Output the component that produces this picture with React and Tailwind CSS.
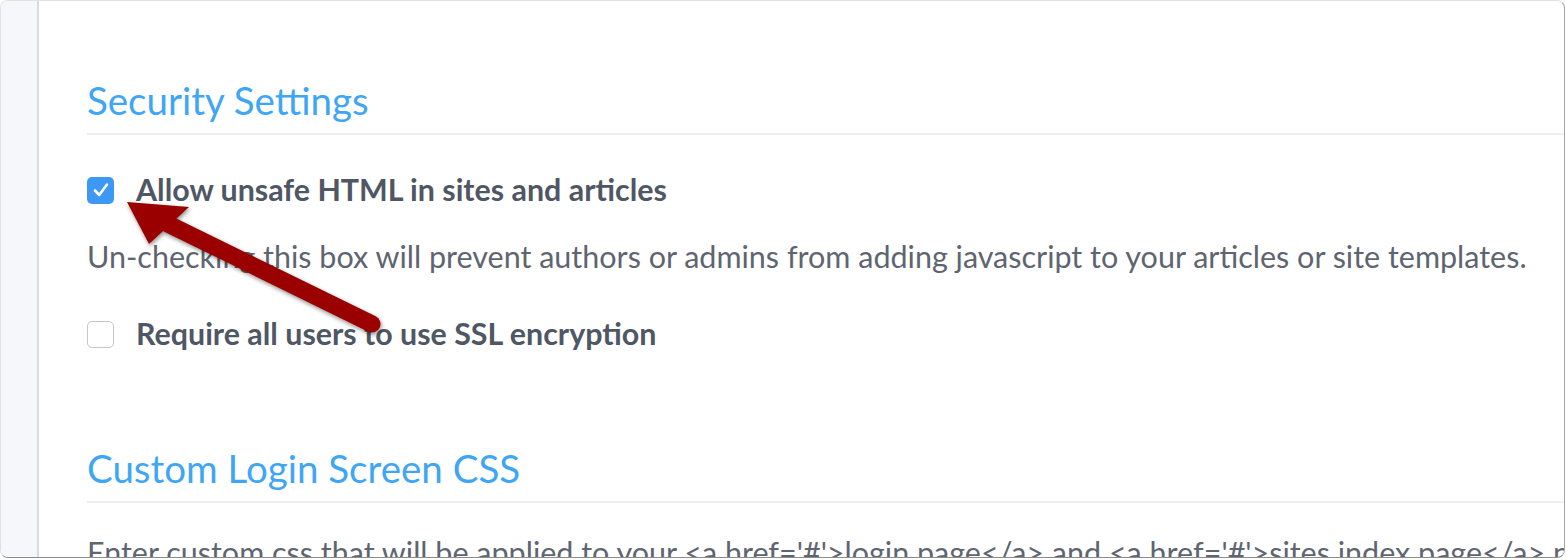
import React from "react";

const Checkbox = ({ checked }) =>
  checked ? (
    <span className="flex items-center justify-center w-[27px] h-[27px] rounded-[5px] bg-[#3d98f3] shrink-0">
      <svg width="20" height="20" viewBox="0 0 20 20" fill="none">
        <path d="M4 10.5 L8.2 15 L16 4.5" stroke="white" strokeWidth="2.6" strokeLinecap="round" strokeLinejoin="round" />
      </svg>
    </span>
  ) : (
    <span className="block w-[27px] h-[27px] rounded-[5px] border border-[#c6c6c6] bg-white shrink-0" />
  );

const SettingRow = ({ checked, label, className }) => (
  <div className={`flex items-center gap-[22px] h-[36px] ${className}`}>
    <Checkbox checked={checked} />
    <span className="text-[30.4px] font-bold text-[#4f5764] whitespace-nowrap">{label}</span>
  </div>
);

const Arrow = () => (
  <svg
    className="absolute left-0 top-0 pointer-events-none drop-shadow-[1px_2px_2px_rgba(0,0,0,0.45)]"
    width="420"
    height="360"
    viewBox="0 0 420 360"
  >
    <line x1="372" y1="324" x2="168" y2="224" stroke="#9a0000" strokeWidth="17" strokeLinecap="round" />
    <polygon points="127,202 189,207 149,244" fill="#9a0000" />
  </svg>
);

export default function App() {
  return (
    <div className="relative w-[1566px] h-[560px] bg-white overflow-hidden font-['Lato',sans-serif]">
      <div className="flex h-[558px] w-[1565px] rounded-[8px] border border-[#e2e2e2] border-r-[#a8a8a8] border-b-[#8c8c8c] overflow-hidden">
        <div className="w-[38px] shrink-0 bg-[#f5f7fa] border-r-2 border-[#d5dce3]" />
        <div className="flex-1 pl-[48px] pt-[77px] overflow-hidden">
          <h2 className="text-[38.5px] leading-[44px] text-[#3fa6f5] font-normal mb-[11px]">Security Settings</h2>
          <div className="h-[2px] bg-[#efefef]" />

          <SettingRow checked label="Allow unsafe HTML in sites and articles" className="mt-[37px]" />
          <p className="mt-[30px] text-[30.5px] leading-[36px] text-[#5e6571] whitespace-nowrap">
            Un-checking this box will prevent authors or admins from adding javascript to your articles or site templates.
          </p>
          <SettingRow label="Require all users to use SSL encryption" className="mt-[42px]" />

          <h2 className="mt-[94px] text-[38.5px] leading-[44px] text-[#3fa6f5] font-normal mb-[11px]">Custom Login Screen CSS</h2>
          <div className="h-[2px] bg-[#efefef]" />
          <p className="mt-[31px] text-[30.5px] leading-[36px] text-[#5e6571] whitespace-nowrap">
            Enter custom css that will be applied to your &lt;a href='#'&gt;login page&lt;/a&gt; and &lt;a href='#'&gt;sites index page&lt;/a&gt; pages.
          </p>
        </div>
      </div>
      <Arrow />
    </div>
  );
}
